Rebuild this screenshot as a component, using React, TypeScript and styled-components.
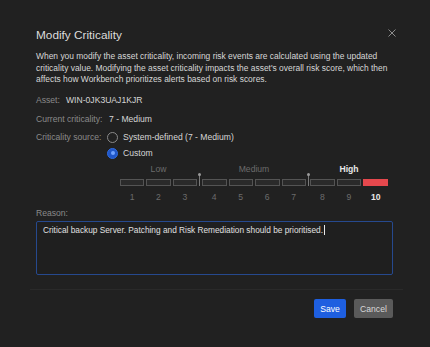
import React from "react";
import styled, { createGlobalStyle } from "styled-components";

const Global = createGlobalStyle`
  html, body { margin: 0; padding: 0; background: #212121; }
  body { font-family: "Liberation Sans", Arial, sans-serif; -webkit-font-smoothing: antialiased; }
  #root { width: 430px; height: 347px; overflow: hidden; background: #212121; }
`;

const Dialog = styled.div`
  margin-left: 30px;
  width: 373px;
  padding-top: 26px;
  display: flex;
  flex-direction: column;
`;

const Body = styled.div`
  padding: 0 10px 0 6px;
  display: flex;
  flex-direction: column;
`;

const Header = styled.div`
  display: flex;
  justify-content: space-between;
  align-items: center;
  height: 18px;
`;

const Title = styled.h1`
  margin: 0;
  font-size: 11.8px;
  line-height: 18px;
  font-weight: 400;
  color: #dcdcdc;
`;

const Close = styled.button`
  border: 0;
  background: none;
  padding: 0;
  width: 10px;
  height: 10px;
  margin-right: -4px;
  margin-top: -4px;
  display: flex;
  align-items: center;
  justify-content: center;
  cursor: pointer;
`;

const Desc = styled.p`
  margin: 7.25px 0 0;
  font-size: 8.45px;
  line-height: 11.5px;
  color: #d6d6d6;
  white-space: nowrap;
`;

const Field = styled.div<{ $top: number }>`
  display: flex;
  align-items: center;
  margin-top: ${(p) => p.$top}px;
  font-size: 8.6px;
  line-height: 12px;
  height: 12px;
  white-space: nowrap;
`;

const Label = styled.span<{ $w: number }>`
  color: #8a8a8a;
  width: ${(p) => p.$w}px;
  flex: none;
`;

const Value = styled.span`
  color: #d6d6d6;
`;

const RadioRow = styled.label<{ $top: number; $indent: number }>`
  display: flex;
  align-items: center;
  gap: 5px;
  height: 12px;
  margin-top: ${(p) => p.$top}px;
  margin-left: ${(p) => p.$indent}px;
  font-size: 8.6px;
  line-height: 12px;
  color: #d6d6d6;
  white-space: nowrap;
`;

const Radio = styled.span<{ $checked?: boolean }>`
  box-sizing: border-box;
  width: 11px;
  height: 11px;
  border-radius: 50%;
  flex: none;
  border: 1px solid ${(p) => (p.$checked ? "#2f6be0" : "#8a8a8a")};
  background: ${(p) => (p.$checked ? "#1f56c9" : "transparent")};
  display: flex;
  align-items: center;
  justify-content: center;
  &::after {
    content: "";
    display: ${(p) => (p.$checked ? "block" : "none")};
    width: 4px;
    height: 4px;
    border-radius: 50%;
    background: #6fa2ff;
  }
`;

const Scale = styled.div`
  display: flex;
  margin-left: 84px;
  margin-top: 4px;
  width: 268px;
`;

const Group = styled.div<{ $w: number }>`
  width: ${(p) => p.$w}px;
  display: flex;
  flex-direction: column;
  align-items: stretch;
`;

const GroupLabel = styled.div<{ $active?: boolean }>`
  text-align: center;
  font-size: 8.6px;
  line-height: 12px;
  height: 12px;
  color: ${(p) => (p.$active ? "#e8e8e8" : "#6c6c6c")};
  font-weight: ${(p) => (p.$active ? 700 : 400)};
`;

const Bars = styled.div`
  display: flex;
  gap: 2px;
  margin-top: 4px;
`;

const Bar = styled.div<{ $on?: boolean }>`
  flex: 1;
  box-sizing: border-box;
  height: 7px;
  border: 1px solid ${(p) => (p.$on ? "#e5484d" : "#545454")};
  background: ${(p) => (p.$on ? "#e5484d" : "#2a2a2a")};
`;

const Nums = styled.div`
  display: flex;
  gap: 2px;
  margin-top: 5px;
`;

const Num = styled.div<{ $on?: boolean }>`
  flex: 1;
  text-align: center;
  font-size: 8.6px;
  line-height: 12px;
  color: ${(p) => (p.$on ? "#e8e8e8" : "#6c6c6c")};
  font-weight: ${(p) => (p.$on ? 700 : 400)};
`;

const Sep = styled.div<{ $w: number }>`
  width: ${(p) => p.$w}px;
  display: flex;
  justify-content: center;
  padding-top: 11px;
`;

const Tick = styled.div`
  position: relative;
  width: 1px;
  height: 12px;
  background: #7a7a7a;
  &::before {
    content: "";
    position: absolute;
    top: -1px;
    left: -1px;
    width: 3px;
    height: 3px;
    border-radius: 50%;
    background: #9a9a9a;
  }
`;

const ReasonLabel = styled.div`
  margin-top: 4px;
  font-size: 8.6px;
  line-height: 12px;
  color: #8a8a8a;
`;

const TextBox = styled.div`
  box-sizing: border-box;
  margin-top: 2px;
  height: 54px;
  border: 1px solid #26498e;
  border-radius: 2px;
  background: #1f1f1f;
  padding: 2px 6px;
  font-size: 8.3px;
  line-height: 12px;
  color: #e0e0e0;
  white-space: nowrap;
`;

const Caret = styled.span`
  display: inline-block;
  width: 1px;
  height: 10px;
  margin-left: 1px;
  vertical-align: -2px;
  background: #e8e8e8;
`;

const Divider = styled.div`
  margin-top: 14px;
  height: 1px;
  background: #2a2a2a;
`;

const Footer = styled.div`
  display: flex;
  justify-content: flex-end;
  gap: 8px;
  padding: 9px 10px 0 0;
`;

const Button = styled.button<{ $primary?: boolean }>`
  height: 19px;
  padding: 0;
  border: 0;
  border-radius: 2px;
  font-family: inherit;
  font-size: 8.6px;
  color: ${(p) => (p.$primary ? "#ffffff" : "#d8d8d8")};
  background: ${(p) => (p.$primary ? "#1e5fe0" : "#5a5a5a")};
  width: ${(p) => (p.$primary ? 32 : 39)}px;
`;

const groups = [
  { label: "Low", w: 77, nums: [1, 2, 3] },
  { label: "Medium", w: 104, nums: [4, 5, 6, 7] },
  { label: "High", w: 78, nums: [8, 9, 10], active: true },
];

export default function App() {
  return (
    <>
      <Global />
      <Dialog>
        <Body>
          <Header>
            <Title>Modify Criticality</Title>
            <Close aria-label="Close">
              <svg width="8" height="8" viewBox="0 0 8 8">
                <path d="M0.5 0.5 L7.5 7.5 M7.5 0.5 L0.5 7.5" stroke="#8c8c8c" strokeWidth="1" />
              </svg>
            </Close>
          </Header>
          <Desc>
            When you modify the asset criticality, incoming risk events are calculated using the updated
            <br />
            criticality value. Modifying the asset criticality impacts the asset's overall risk score, which then
            <br />
            affects how Workbench prioritizes alerts based on risk scores.
          </Desc>
          <Field $top={8.25}>
            <Label $w={30}>Asset:</Label>
            <Value>WIN-0JK3UAJ1KJR</Value>
          </Field>
          <Field $top={7}>
            <Label $w={73}>Current criticality:</Label>
            <Value>7 - Medium</Value>
          </Field>
          <Field $top={6}>
            <Label $w={71}>Criticality source:</Label>
            <RadioRow $top={0} $indent={0}>
              <Radio />
              System-defined (7 - Medium)
            </RadioRow>
          </Field>
          <RadioRow $top={4} $indent={71}>
            <Radio $checked />
            Custom
          </RadioRow>
          <Scale>
            {groups.map((g, gi) => (
              <React.Fragment key={g.label}>
                {gi > 0 && (
                  <Sep $w={gi === 1 ? 5 : 4}>
                    <Tick />
                  </Sep>
                )}
                <Group $w={g.w}>
                  <GroupLabel $active={g.active}>{g.label}</GroupLabel>
                  <Bars>
                    {g.nums.map((n) => (
                      <Bar key={n} $on={n === 10} />
                    ))}
                  </Bars>
                  <Nums>
                    {g.nums.map((n) => (
                      <Num key={n} $on={n === 10}>
                        {n}
                      </Num>
                    ))}
                  </Nums>
                </Group>
              </React.Fragment>
            ))}
          </Scale>
          <ReasonLabel>Reason:</ReasonLabel>
          <TextBox>
            Critical backup Server. Patching and Risk Remediation should be prioritised.
            <Caret />
          </TextBox>
        </Body>
        <Divider />
        <Footer>
          <Button $primary>Save</Button>
          <Button>Cancel</Button>
        </Footer>
      </Dialog>
    </>
  );
}
